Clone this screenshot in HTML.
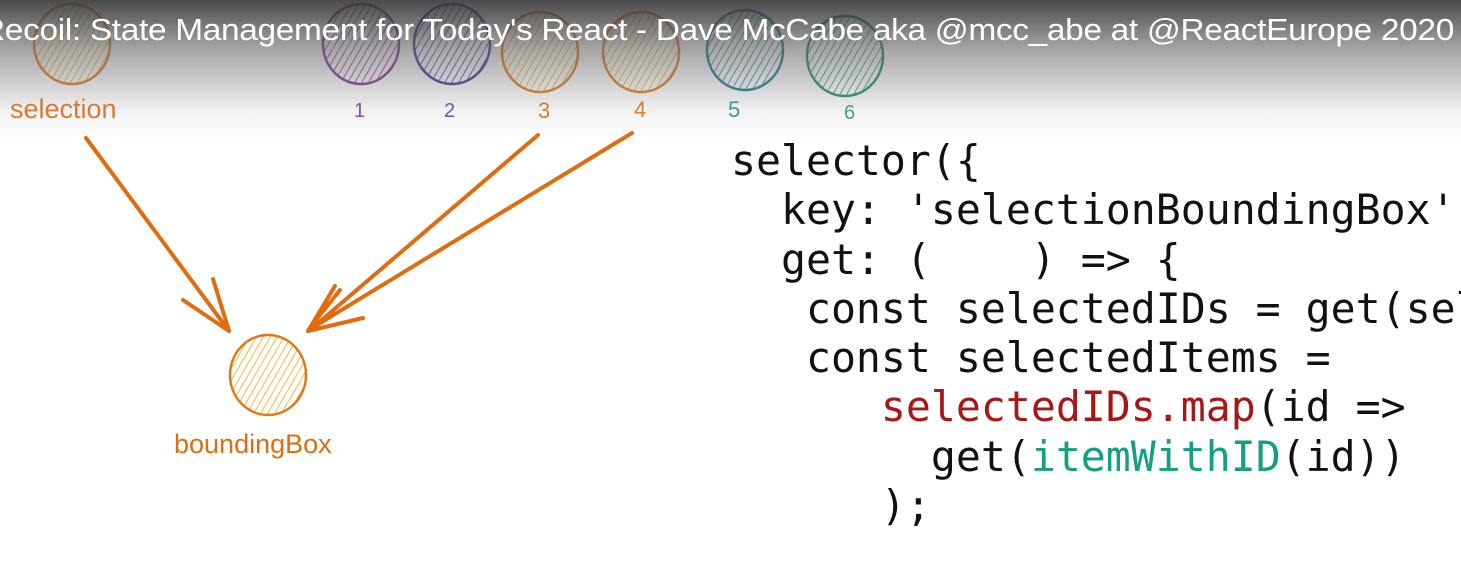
<!DOCTYPE html>
<html><head><meta charset="utf-8"><style>
html,body{margin:0;padding:0;width:1461px;height:569px;overflow:hidden;background:#fff}
.wrap{position:relative;width:1461px;height:569px;background:#fff;overflow:hidden}
svg{position:absolute;left:0;top:0}
.grad{position:absolute;left:0;top:0;width:1461px;height:140px;background:linear-gradient(to bottom,rgba(55,55,55,0.9) 0%,rgba(105,105,105,0.6) 35%,rgba(190,190,190,0.2) 80%,rgba(255,255,255,0) 100%)}
.title{position:absolute;left:-19px;top:12px;font-family:"Liberation Sans",sans-serif;font-size:31px;color:#fff;white-space:nowrap;letter-spacing:-0.3px;transform:scaleX(1.078);transform-origin:0 0}
.code{position:absolute;left:731px;top:136px;font-family:"DejaVu Sans Mono",monospace;font-size:41.5px;line-height:49.3px;color:#111;white-space:pre}
.r{color:#a81616}.g{color:#13a080}
</style></head><body><div class="wrap">
<svg width="1461" height="569" viewBox="0 0 1461 569">
<defs>
<pattern id="ho" width="6" height="6" patternUnits="userSpaceOnUse" patternTransform="rotate(30)"><line x1="0" y1="0" x2="0" y2="6" stroke="#f0b030" stroke-width="1.8"/></pattern>
<pattern id="hp" width="6" height="6" patternUnits="userSpaceOnUse" patternTransform="rotate(30)"><line x1="0" y1="0" x2="0" y2="6" stroke="#8a3aa8" stroke-width="1.8"/></pattern>
<pattern id="hb" width="6" height="6" patternUnits="userSpaceOnUse" patternTransform="rotate(30)"><line x1="0" y1="0" x2="0" y2="6" stroke="#5a3ab0" stroke-width="1.8"/></pattern>
<pattern id="ht" width="6" height="6" patternUnits="userSpaceOnUse" patternTransform="rotate(30)"><line x1="0" y1="0" x2="0" y2="6" stroke="#2a8a98" stroke-width="1.8"/></pattern>
<pattern id="hg" width="6" height="6" patternUnits="userSpaceOnUse" patternTransform="rotate(30)"><line x1="0" y1="0" x2="0" y2="6" stroke="#2a9a78" stroke-width="1.8"/></pattern>
</defs>
<g stroke-width="2.5">
<ellipse cx="72" cy="44" rx="38" ry="40" fill="url(#ho)" stroke="#e07818"/>
<ellipse cx="361" cy="44" rx="38" ry="40" fill="url(#hp)" stroke="#7a3098"/>
<ellipse cx="452" cy="44" rx="38" ry="40" fill="url(#hb)" stroke="#4a2aa0"/>
<ellipse cx="540" cy="52" rx="38" ry="40" fill="url(#ho)" stroke="#e07818"/>
<ellipse cx="641" cy="52" rx="38" ry="40" fill="url(#ho)" stroke="#e07818"/>
<ellipse cx="745" cy="50" rx="38" ry="40" fill="url(#ht)" stroke="#1a7a88"/>
<ellipse cx="845" cy="56" rx="38" ry="40" fill="url(#hg)" stroke="#1a8a68"/>
<ellipse cx="268" cy="375" rx="38" ry="40" fill="url(#ho)" stroke="#e07818"/>
</g>
<g stroke="#e06c10" stroke-width="4" stroke-linecap="round" fill="none">
<path d="M86 138 L229 331 M229 331 L183 300 M229 331 L213 279"/>
<path d="M538 135 L310 330 M632 133 L312 328 M308 331 L363 318 M308 331 L335 286 M312 325 L340 290"/>
</g>
<g font-family="'Liberation Sans',sans-serif" font-size="26" fill="#e06c10">
<text x="10" y="118" font-size="27">selection</text>
<text x="174" y="453" font-size="27">boundingBox</text>
<text x="354" y="117" font-size="20" fill="#7a3098">1</text>
<text x="444" y="117" font-size="20" fill="#5a3ab0">2</text>
<text x="538" y="118" font-size="22">3</text>
<text x="634" y="117" font-size="22">4</text>
<text x="728" y="117" font-size="22" fill="#2a8a98">5</text>
<text x="844" y="119" font-size="20" fill="#2a9a78">6</text>
</g>
</svg>
<div class="grad"></div>
<div class="title">Recoil: State Management for Today's React - Dave McCabe aka @mcc_abe at @ReactEurope 2020</div>
<div class="code">selector({
  key: 'selectionBoundingBox',
  get: (    ) =&gt; {
   const selectedIDs = get(selection);
   const selectedItems =
      <span class="r">selectedIDs.map</span>(id =&gt;
        get(<span class="g">itemWithID</span>(id))
      );</div>
</div></body></html>
